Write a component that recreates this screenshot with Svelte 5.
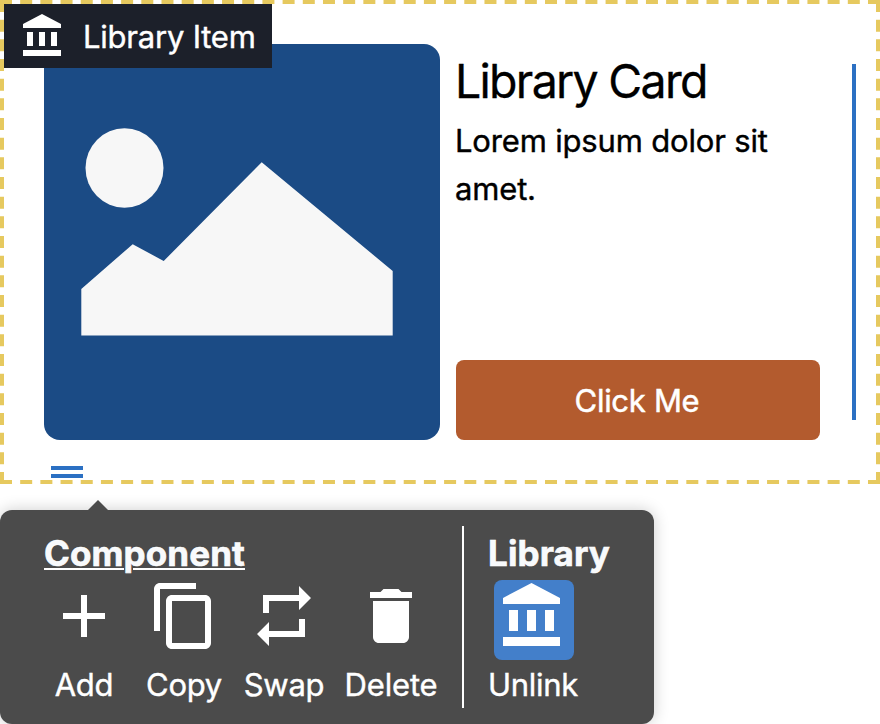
<script>
  const bank = 'M4 10v7h3v-7H4zm6 0v7h3v-7h-3zM2 22h19v-3H2v3zm14-12v7h3v-7h-3zm-4.5-9L2 6v2h19V6l-9.5-5z';
  const actions = [
    { label: 'Add', path: 'M19 13h-6v6h-2v-6H5v-2h6V5h2v6h6v2z' },
    { label: 'Copy', path: 'M16 1H4c-1.1 0-2 .9-2 2v14h2V3h12V1zm3 4H8c-1.1 0-2 .9-2 2v14c0 1.1.9 2 2 2h11c1.1 0 2-.9 2-2V7c0-1.1-.9-2-2-2zm0 16H8V7h11v14z' },
    { label: 'Swap', path: 'M7 7h10v3l4-4-4-4v3H5v6h2V7zm10 10H7v-3l-4 4 4 4v-3h12v-6h-2v4z' },
    { label: 'Delete', path: 'M6 19c0 1.1.9 2 2 2h8c1.1 0 2-.9 2-2V7H6v12zM19 4h-3.5l-1-1h-5l-1 1H5v2h14V4z' }
  ];
</script>

<main>
  <section class="frame">
    <svg class="outline" viewBox="0 0 880 484" aria-hidden="true">
      <path class="across" d="M0 2H880M0 482H880" />
      <path class="down" d="M2 0V484M878 0V484" />
    </svg>
    <div class="tag">
      <svg class="tag-icon" viewBox="0 0 24 24"><path d={bank} /></svg>
      <span>Library Item</span>
    </div>
    <div class="row">
      <svg class="picture" viewBox="44 44 396 396">
        <ellipse cx="124.5" cy="168" rx="39" ry="39.7" />
        <path d="M81.3 289L132.7 244.2L163.7 261L261.7 162.3L392.7 271V335.4H81.3Z" />
      </svg>
      <div class="body">
        <h2>Library Card</h2>
        <p>Lorem ipsum dolor sit amet.</p>
        <button class="cta">Click Me</button>
      </div>
      <div class="bar"></div>
    </div>
    <div class="handle"></div>
  </section>

  <section class="toolbar">
    <div class="arrow"></div>
    <div class="group">
      <h3 class="component">Component</h3>
      <div class="actions">
        {#each actions as a}
          <div class="action {a.label.toLowerCase()}">
            <svg viewBox="0 0 24 24"><path d={a.path} /></svg>
            <span>{a.label}</span>
          </div>
        {/each}
      </div>
    </div>
    <div class="divider"></div>
    <div class="group">
      <h3 class="library">Library</h3>
      <div class="unlink">
        <div class="tile"><svg viewBox="0 0 24 24"><path d={bank} /></svg></div>
        <span>Unlink</span>
      </div>
    </div>
  </section>
</main>

<style>
  :global(body) { background: #fff; }
  main {
    width: 880px; height: 724px; overflow: hidden;
    display: flex; flex-direction: column; gap: 26px;
    font-family: Inter, sans-serif; font-size: 31px; font-weight: 400; letter-spacing: -0.3px; color: #000;
    -webkit-text-stroke: 0.4px currentColor;
  }
  h2, h3, p { margin: 0; }
  span { white-space: nowrap; }
  svg { display: block; flex: none; }
  .frame { position: relative; box-sizing: border-box; height: 484px; padding: 44px 24px 0 44px; flex: none; }
  .outline { position: absolute; left: 0; top: 0; width: 880px; height: 484px; fill: none; stroke: #e6c95f; stroke-width: 4; }
  .across { stroke-dasharray: 12 8.186; }
  .down { stroke-dasharray: 12 7.667; }
  .tag {
    position: absolute; left: 4px; top: 4px; width: 268px; height: 64px; box-sizing: border-box;
    padding-left: 15px; display: flex; align-items: center; gap: 16px;
    background: #1c202a; color: #fff; line-height: 62px; z-index: 1;
    -webkit-text-stroke-color: #fff;
  }
  .tag span { padding-top: 2px; letter-spacing: -0.22px; }
  .tag-icon { width: 48px; height: 48px; fill: #fff; }
  .row { display: flex; height: 396px; }
  .picture { width: 396px; height: 396px; background: #1b4b85; border-radius: 16px; fill: #f7f7f7; }
  .body { width: 364px; margin-left: 16px; display: flex; flex-direction: column; }
  h2 { font-size: 46.5px; font-weight: 400; letter-spacing: -1.72px; line-height: 74px; margin-left: -1px; white-space: nowrap; -webkit-text-stroke-width: 0.3px; }
  p { line-height: 48px; margin: -1px 0 0 -1px; letter-spacing: -0.17px; }
  .cta {
    margin-top: auto; height: 80px; border: 0; border-radius: 8px; padding: 0 2px 0 0;
    background: #b35b2e; color: #fff; font: inherit; letter-spacing: -0.3px;
    -webkit-text-stroke: 0.5px #fff;
  }
  .bar { width: 4px; height: 356px; margin: 20px 0 0 32px; background: #2b70c3; }
  .handle { width: 32px; height: 4px; margin: 26px 0 0 7px; border: solid #2b70c3; border-width: 4px 0; }
  .toolbar {
    position: relative; width: 654px; height: 214px; flex: none; box-sizing: border-box;
    display: flex; padding: 16px 0 16px 44px; border-radius: 12px;
    background: #4b4b4b; color: #fff; box-shadow: 0 0 16px rgba(0, 0, 0, .2);
    -webkit-text-stroke-color: #fff;
  }
  .arrow { position: absolute; left: 88px; top: -10px; border: 10px solid transparent; border-top: 0; border-bottom-color: #4b4b4b; }
  .group { padding-top: 1px; }
  h3 { font-size: 35px; font-weight: 700; letter-spacing: .1px; line-height: 52px; margin-bottom: 1px; color: #f8fafc; white-space: nowrap; -webkit-text-stroke-width: 0.6px; }
  .component { text-decoration: underline; text-decoration-thickness: 2px; text-underline-offset: 2px; }
  .actions { display: flex; gap: 20px; width: 418px; }
  .action { width: 80px; display: flex; flex-direction: column; align-items: center; }
  .delete { width: 92px; margin-left: 1px; letter-spacing: -0.15px; }
  .action svg, .tile svg { width: 72px; height: 72px; fill: #fff; }
  .action span { line-height: 38px; margin-top: 14px; }
  .divider { width: 2px; height: 182px; background: #fff; margin-right: 24px; }
  .tile { width: 77px; height: 80px; margin-left: 6px; padding-left: 3px; border-radius: 8px; background: #437fca; }
  .unlink span { display: block; line-height: 38px; margin-top: 6px; }
</style>
